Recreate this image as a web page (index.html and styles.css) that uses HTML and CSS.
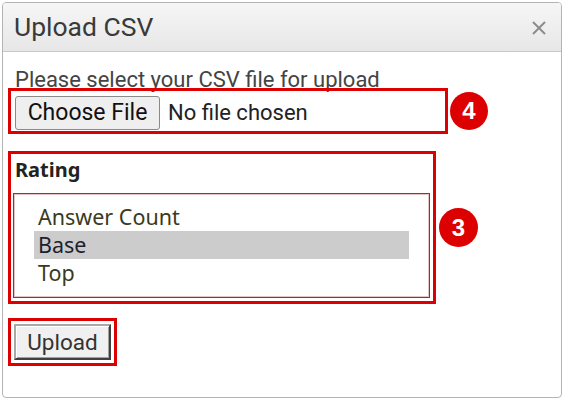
FILE: index.html
```html
<!DOCTYPE html>
<html>
<head>
<meta charset="utf-8">
<link rel="stylesheet" href="styles.css">
</head>
<body>
<div class="dialog">
  <div class="header">
    <span class="title">Upload CSV</span>
    <svg class="close" width="14" height="14" viewBox="0 0 14 14"><path d="M1 1 L13 13 M13 1 L1 13" stroke="#8c8c8c" stroke-width="2" fill="none"/></svg>
  </div>
  <div class="body">
    <p class="intro">Please select your CSV file for upload</p>
    <div class="row">
      <div class="mark file-mark">
        <button class="choose">Choose File</button>
        <span class="nofile">No file chosen</span>
      </div>
      <span class="badge badge4">4</span>
    </div>
    <div class="row row-rating">
      <div class="mark rating-mark">
        <div class="label">Rating</div>
        <div class="listbox">
          <div class="option">Answer Count</div>
          <div class="option selected">Base</div>
          <div class="option">Top</div>
        </div>
      </div>
      <span class="badge badge3">3</span>
    </div>
    <div class="mark upload-mark">
      <button class="upload">Upload</button>
    </div>
  </div>
</div>
</body>
</html>
```
FILE: styles.css
```css
html, body {
  margin: 0;
  padding: 0;
  background: #fff;
}
body {
  width: 563px;
  height: 400px;
  overflow: hidden;
  font-family: Roboto, "Liberation Sans", sans-serif;
}
.dialog {
  box-sizing: border-box;
  margin: 2px 1px 0 2px;
  width: 560px;
  height: 396px;
  border: 1px solid #b4b4b4;
  border-radius: 4px;
  overflow: hidden;
  background: #fff;
}
.header {
  box-sizing: border-box;
  height: 49px;
  display: flex;
  align-items: center;
  justify-content: space-between;
  padding: 0 15px 0 11px;
  background: linear-gradient(#f6f6f6, #e7e7e7);
  border-bottom: 1px solid #c8c8c8;
}
.title {
  font-size: 26.5px;
  color: #3a3a3a;
  line-height: 30px;
}
.close {
  display: block;
  margin-top: 1px;
}
.body {
  padding: 14px 0 0 5px;
}
.intro {
  margin: 0;
  padding: 6px 0 0 7px;
  font-size: 22px;
  line-height: 16px;
  height: 16px;
  color: #444;
  position: relative;
  z-index: 0;
}
.row {
  display: flex;
  align-items: center;
}
.mark {
  box-sizing: border-box;
  border: 3px solid #dd0000;
}
.file-mark {
  width: 440px;
  height: 46px;
  display: flex;
  align-items: center;
  padding: 3px 3px 0 4px;
  position: relative;
  z-index: 1;
}
.choose {
  box-sizing: border-box;
  height: 34px;
  width: 145px;
  padding: 0;
  font-family: Roboto, "Liberation Sans", sans-serif;
  font-size: 23px;
  color: #111;
  background: #efefef;
  border: 1px solid #8a8a8a;
  border-radius: 3px;
}
.nofile {
  margin-left: 8px;
  font-size: 22px;
  color: #222;
}
.badge {
  box-sizing: border-box;
  width: 38px;
  height: 38px;
  border-radius: 50%;
  background: #dd0000;
  color: #fff;
  font-family: "Liberation Sans", "DejaVu Sans", sans-serif;
  font-weight: bold;
  font-size: 24px;
  display: flex;
  align-items: center;
  justify-content: center;
}
.badge4 {
  margin-left: 2px;
}
.row-rating {
  margin-top: 17px;
}
.badge3 {
  margin-left: 3px;
  width: 39px;
  height: 39px;
}
.rating-mark {
  width: 428px;
  height: 153px;
  padding: 3px 3px 3px 2px;
  font-family: "Noto Sans", "DejaVu Sans", sans-serif;
}
.label {
  font-weight: bold;
  font-size: 20px;
  line-height: 26px;
  color: #222;
  padding-left: 2px;
  height: 36px;
}
.listbox {
  box-sizing: border-box;
  height: 105px;
  border: 1px solid #9a3030;
  box-shadow: inset 0 0 0 1px #e6c4c4;
  padding: 9px 20px 0 20px;
}
.option {
  height: 28px;
  line-height: 28px;
  font-size: 21.5px;
  color: #3a3a22;
  padding-left: 4px;
}
.selected {
  background: #cccccc;
  color: #1e1e2e;
}
.upload-mark {
  margin-top: 14px;
  width: 109px;
  height: 48px;
  padding: 3px;
}
.upload {
  box-sizing: border-box;
  width: 97px;
  height: 36px;
  padding: 0;
  font-family: Roboto, "Liberation Sans", sans-serif;
  font-size: 22.5px;
  color: #333;
  background: #f0f0f0;
  border: 2px solid;
  border-color: #a8a8a8 #404040 #404040 #a8a8a8;
  box-shadow: inset 1px 1px 0 #fff, inset -1px -1px 0 #a0a0a0;
}
```
